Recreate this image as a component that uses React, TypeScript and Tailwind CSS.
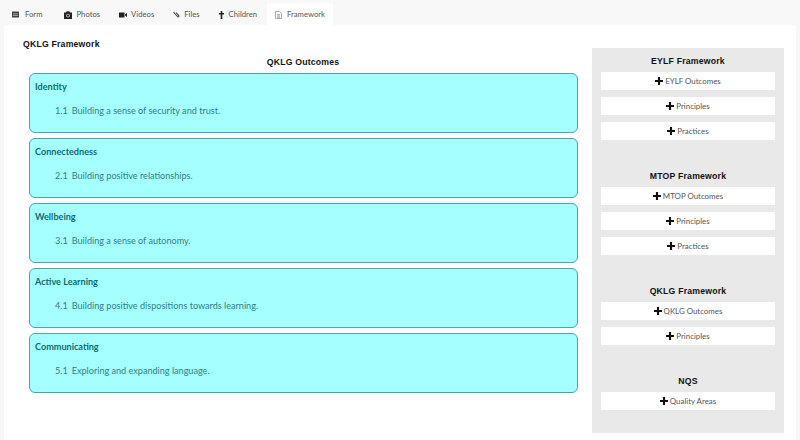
import React from "react";

const Plus = () => (
  <svg width="8" height="8" viewBox="0 0 9 9" className="mr-[2px] shrink-0">
    <path d="M3.300 0h2.400v3.300H9v2.400H5.700V9H3.300V5.700H0V3.300h3.300z" fill="#111" />
  </svg>
);

const FormIcon = () => (
  <svg width="7" height="7" viewBox="0 0 7 7">
    <path d="M0 .5h7v6H0z" fill="#444" />
    <path d="M1 2.500h5v.8H1zM1 4.200h5v.8H1z" fill="#bbb" />
  </svg>
);
const CameraIcon = () => (
  <svg width="8" height="8" viewBox="0 0 8 8">
    <path d="M0 1.500h2L2.700.3h2.600L6 1.500h2V8H0z" fill="#222" />
    <circle cx="4" cy="4.600" r="1.900" fill="#ccc" />
    <circle cx="4" cy="4.600" r="1.100" fill="#222" />
  </svg>
);
const VideoIcon = () => (
  <svg width="8" height="8" viewBox="0 0 8 8">
    <path d="M0 1.500h5.500v5H0zM6 3.600l2-1.600v4L6 4.400z" fill="#222" />
  </svg>
);
const ClipIcon = () => (
  <svg width="7" height="7" viewBox="0 0 7 7">
    <path d="M1.500.8.800 1.500 4.600 5.600c.8.800 1.900-.3 1.100-1.100L3 1.700" fill="none" stroke="#555" strokeWidth="1.100" />
  </svg>
);
const CrossIcon = () => (
  <svg width="5" height="8" viewBox="0 0 5 8">
    <path d="M1.700 0h1.600v2H5v1.500H3.300V8H1.700V3.500H0V2h1.700z" fill="#222" />
  </svg>
);
const DocIcon = () => (
  <svg width="7" height="8" viewBox="0 0 7 8">
    <path d="M.5.500h4L6.500 2.500v5H.5zM2 3.500h3M2 5h3M2 6.300h3" fill="none" stroke="#888" strokeWidth=".7" />
  </svg>
);

const tabs: { label: string; icon: React.ReactNode; mr: string; gap: string }[] = [
  { label: "Form", icon: <FormIcon />, mr: "mr-[5px]", gap: "gap-[6px]" },
  { label: "Photos", icon: <CameraIcon />, mr: "mr-[3px]", gap: "gap-[5px]" },
  { label: "Videos", icon: <VideoIcon />, mr: "mr-[3px]", gap: "gap-[4px]" },
  { label: "Files", icon: <ClipIcon />, mr: "mr-[3px]", gap: "gap-[4px]" },
  { label: "Children", icon: <CrossIcon />, mr: "mr-[2px]", gap: "gap-[5px]" },
];

const outcomes = [
  ["Identity", "1.1", "Building a sense of security and trust."],
  ["Connectedness", "2.1", "Building positive relationships."],
  ["Wellbeing", "3.1", "Building a sense of autonomy."],
  ["Active Learning", "4.1", "Building positive dispositions towards learning."],
  ["Communicating", "5.1", "Exploring and expanding language."],
];

const sideGroups = [
  { title: "EYLF Framework", items: ["EYLF Outcomes", "Principles", "Practices"], h: "h-[115px]" },
  { title: "MTOP Framework", items: ["MTOP Outcomes", "Principles", "Practices"], h: "h-[115px]" },
  { title: "QKLG Framework", items: ["QKLG Outcomes", "Principles"], h: "h-[90px]" },
  { title: "NQS", items: ["Quality Areas"], h: "" },
];

const heading = "font-['Liberation_Sans',sans-serif] text-[8.700px] leading-[13px] font-bold tracking-[0.2px] text-[#111]";

export default function App() {
  return (
    <div className="w-[800px] h-[440px] overflow-hidden bg-[#f8f8f8] pl-1 font-['Lato','Liberation_Sans',sans-serif]">
      <div className="flex h-[25px] items-end pt-[3px]">
        {tabs.map((t) => (
          <div key={t.label} className={`flex h-[22px] items-center px-[8px] pt-[1px] text-[7.700px] text-[#555] ${t.mr} ${t.gap}`}>
            {t.icon}
            <span>{t.label}</span>
          </div>
        ))}
        <div className="flex h-[22px] items-center gap-[5px] rounded-t-[2px] bg-white px-[8px] pt-[1px] text-[7.700px] text-[#555]">
          <DocIcon />
          <span>Framework</span>
        </div>
      </div>
      <div className="flex h-[415px] w-[792px] bg-white pl-[19px]">
        <div className="w-[555px] shrink-0">
          <h2 className={`mt-[13px] h-[13px] ${heading}`}>QKLG Framework</h2>
          <h3 className={`mt-[5px] h-[13px] pl-[5px] text-center ${heading}`}>QKLG Outcomes</h3>
          <div className="mt-[4px] ml-[6px] flex flex-col gap-[5px]">
            {outcomes.map(([t, n, d]) => (
              <div key={t} className="h-[60px] rounded-[6px] border border-[#4fa3a8] bg-[#a6ffff] px-[5px] pt-[6px] text-[#0c6b70]">
                <div className="text-[9.100px] leading-[14px] font-bold">{t}</div>
                <div className="mt-[10px] pl-[20px] text-[9.100px] leading-[14px] text-[#2f7f85]">
                  <span>{n}</span>
                  <span className="ml-[4px]">{d}</span>
                </div>
              </div>
            ))}
          </div>
        </div>
        <div className="ml-[14px] mt-[23px] h-[385px] w-[192px] shrink-0 bg-[#e9e9e9] px-[9px] pt-[7px]">
          {sideGroups.map((g) => (
            <div key={g.title} className={g.h}>
              <h4 className={`h-[13px] text-center ${heading}`}>{g.title}</h4>
              <div className="mt-[4px] flex flex-col gap-[7px]">
                {g.items.map((i) => (
                  <div key={i} className="flex h-[18px] items-center justify-center bg-white text-[7.900px] text-[#555]">
                    <Plus />
                    <span className="mt-[1px]">{i}</span>
                  </div>
                ))}
              </div>
            </div>
          ))}
        </div>
      </div>
    </div>
  );
}
